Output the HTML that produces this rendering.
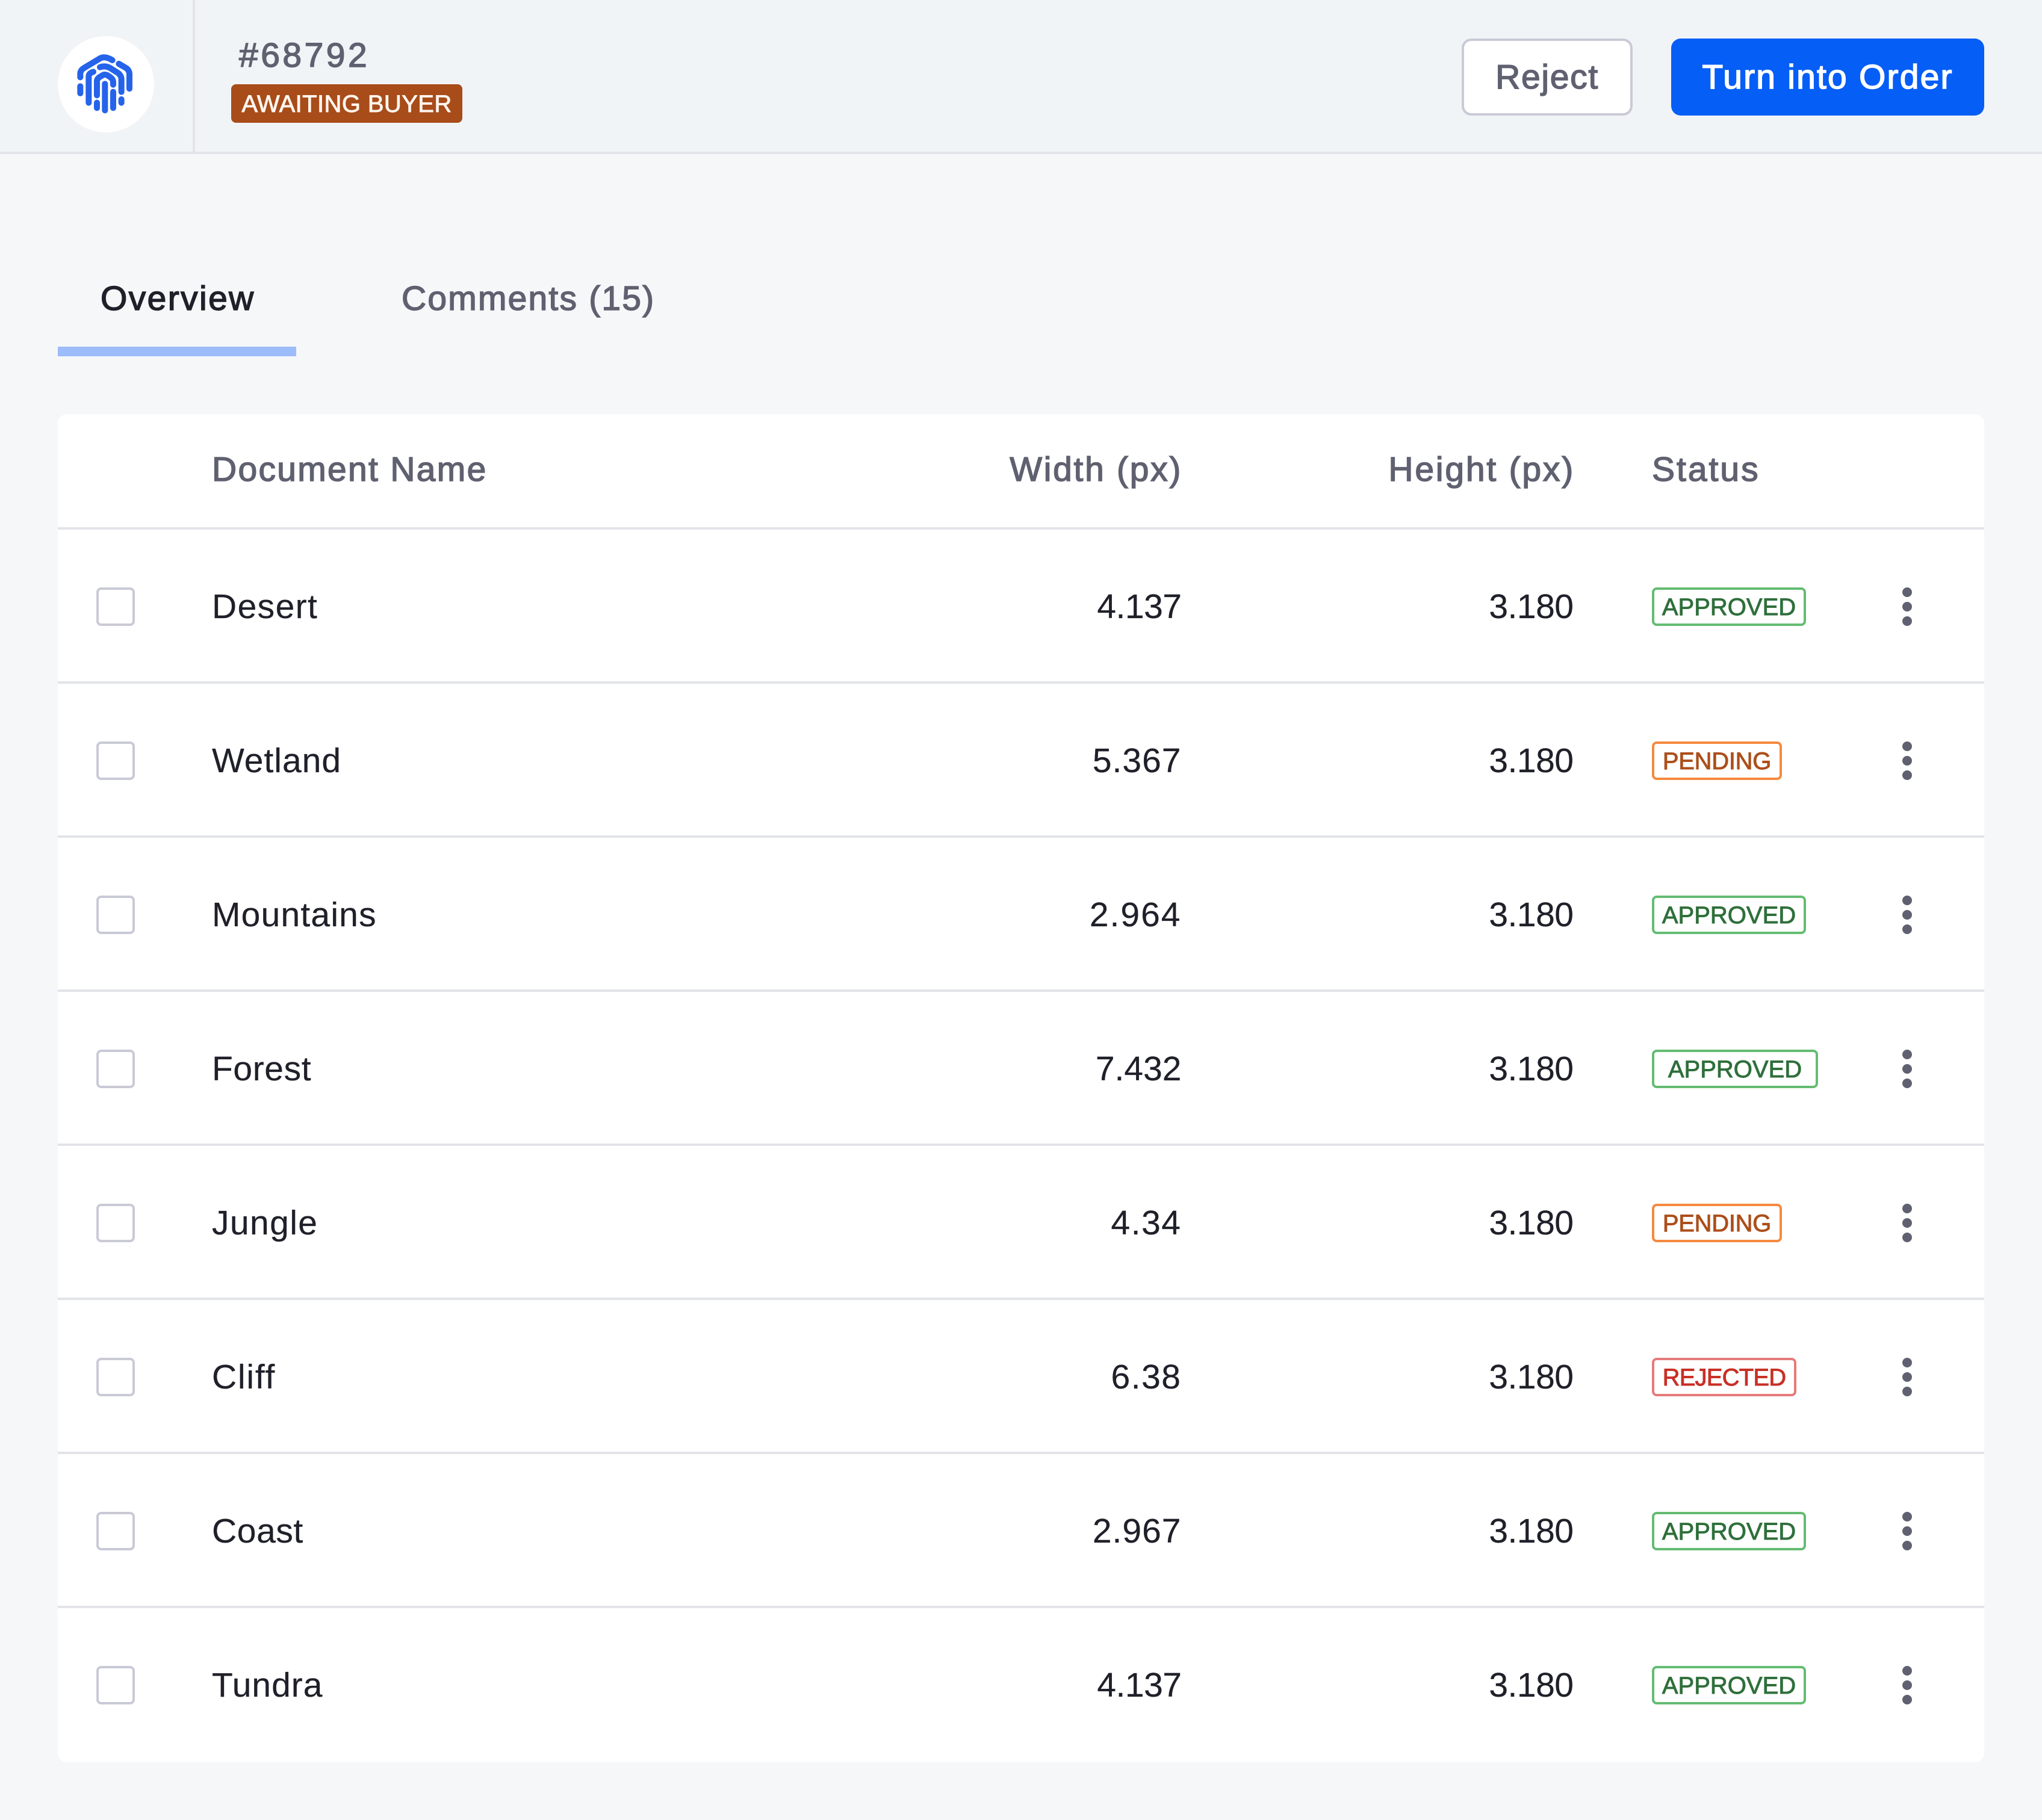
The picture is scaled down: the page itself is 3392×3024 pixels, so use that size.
<!DOCTYPE html>
<html lang="en">
<head>
<meta charset="utf-8">
<title>#68792</title>
<style>
html,body{margin:0;padding:0}
body{width:3392px;height:3024px;overflow:hidden;background:#f6f7f9;position:relative;font-family:"Liberation Sans",sans-serif;color:#1f2029}
*{box-sizing:border-box}
.t{position:absolute;white-space:nowrap;line-height:1;font-size:57px}
.m{-webkit-text-stroke:1.5px currentColor}
.g{color:#5f6170}
header{position:absolute;left:0;top:0;width:3392px;height:256px;background:#f1f4f7;border-bottom:4px solid #e2e4e9}
.vd{position:absolute;left:320px;top:0;width:4px;height:252px;background:#e2e4e9}
.logo{position:absolute;left:96px;top:60px;width:160px;height:160px;border-radius:50%;background:#fff}
.ic{position:absolute;left:60px;top:40px;width:240px;height:200px}
.aw{position:absolute;left:384px;top:140px;width:384px;height:64px;padding-top:3px;border-radius:8px;background:#a84c1a;color:#fff6ee;font-size:40px;display:flex;align-items:center;justify-content:center;letter-spacing:.4px;-webkit-text-stroke:.9px currentColor}
.btn{position:absolute;top:64px;height:128px;border-radius:16px;display:flex;align-items:center;justify-content:center;font-size:57px;-webkit-text-stroke:1.5px currentColor}
.rej{left:2428px;width:284px;background:#fff;border:4px solid #c9cad6;color:#5f6170;letter-spacing:1.7px}
.turn{left:2776px;width:520px;background:#055ef6;color:#fff;letter-spacing:2.2px}
.ul{position:absolute;left:96px;top:576px;width:396px;height:16px;background:#9dbcfb}
.card{position:absolute;left:96px;top:688px;width:3200px;height:2240px;background:#fff;border-radius:16px}
.hd{position:absolute;left:0;top:0;width:3200px;height:192px;border-bottom:4px solid #e2e4e9}
.hd .t{top:64px}
.row{position:absolute;left:0;width:3200px;height:256px;border-bottom:4px solid #e2e4e9}
.row:last-child{border-bottom:0}
.row .t{top:100px;-webkit-text-stroke:.25px currentColor}
.n{left:256px;letter-spacing:1px}
.w,.h{text-align:right}
.w{right:1334px;margin-right:-.5px}
.h{right:683px;letter-spacing:-.5px;margin-right:-.5px}
.cb{position:absolute;left:64px;top:96px;width:64px;height:64px;border:4px solid #c9cad6;border-radius:8px}
.b{position:absolute;left:2648px;top:96px;height:64px;padding-top:3px;border-radius:8px;border:4px solid;font-size:40px;display:flex;align-items:center;justify-content:center;-webkit-text-stroke:.9px currentColor;background:#fff}
.a{width:256px;border-color:#64bc72;color:#2f6f3b}
.af{width:276px}
.p{width:216px;border-color:#f6893f;color:#ac4f1a;letter-spacing:-.3px}
.r{width:240px;border-color:#e57b7b;color:#c92f25;letter-spacing:-.8px}
.d{position:absolute;left:3064px;top:96px;width:16px;height:16px;border-radius:50%;background:#5f6170;box-shadow:0 24px 0 #5f6170,0 48px 0 #5f6170}
</style>
</head>
<body>
<header>
  <div class="logo"></div>
  <svg class="ic" viewBox="0 0 720 600" fill="none" stroke="#2563eb" stroke-width="30" stroke-linecap="round" stroke-linejoin="round">
    <path d="M220 265V248Q220 230 240 218L320 170Q345 158 380 180"/>
    <path d="M220 310V345"/>
    <path d="M262 392V262Q262 245 285 238"/>
    <path d="M412 198L450 220Q465 232 465 250V322"/>
    <path d="M318 215Q345 205 370 220L410 245Q425 258 425 275V338"/>
    <path d="M425 375V392"/>
    <path d="M303 355V285Q303 272 318 263L335 253Q345 250 355 255L370 265Q384 275 384 290V302"/>
    <path d="M303 392V418"/>
    <path d="M343 298V430"/>
    <path d="M384 338V418"/>
  </svg>
  <div class="vd"></div>
  <div class="t m g" style="left:397px;top:64px;letter-spacing:4.5px">#68792</div>
  <div class="aw">AWAITING BUYER</div>
  <div class="btn rej">Reject</div>
  <div class="btn turn">Turn into Order</div>
</header>

<div class="t m" style="left:167px;top:468px;letter-spacing:2.4px;color:#1f2029">Overview</div>
<div class="t m g" style="left:667px;top:468px;letter-spacing:2.2px">Comments (15)</div>
<div class="ul"></div>

<div class="card">
  <div class="hd">
    <div class="t m g" style="left:256px;letter-spacing:2.3px">Document Name</div>
    <div class="t m g w" style="letter-spacing:2.7px;margin-right:-2px">Width (px)</div>
    <div class="t m g h" style="letter-spacing:2.8px;margin-right:-3px">Height (px)</div>
    <div class="t m g" style="left:2648px;letter-spacing:3px">Status</div>
  </div>
  <div class="row" style="top:192px"><div class="cb"></div><div class="t n" style="letter-spacing:1.4px">Desert</div><div class="t w" style="letter-spacing:-.5px">4.137</div><div class="t h">3.180</div><div class="b a">APPROVED</div><div class="d"></div></div>
  <div class="row" style="top:448px"><div class="cb"></div><div class="t n">Wetland</div><div class="t w" style="letter-spacing:1px">5.367</div><div class="t h">3.180</div><div class="b p">PENDING</div><div class="d"></div></div>
  <div class="row" style="top:704px"><div class="cb"></div><div class="t n" style="letter-spacing:1.2px">Mountains</div><div class="t w" style="letter-spacing:2px">2.964</div><div class="t h">3.180</div><div class="b a">APPROVED</div><div class="d"></div></div>
  <div class="row" style="top:960px"><div class="cb"></div><div class="t n" style="letter-spacing:.6px">Forest</div><div class="t w">7.432</div><div class="t h">3.180</div><div class="b a af">APPROVED</div><div class="d"></div></div>
  <div class="row" style="top:1216px"><div class="cb"></div><div class="t n" style="letter-spacing:1.4px">Jungle</div><div class="t w" style="letter-spacing:1.5px">4.34</div><div class="t h">3.180</div><div class="b p">PENDING</div><div class="d"></div></div>
  <div class="row" style="top:1472px"><div class="cb"></div><div class="t n" style="letter-spacing:1.8px">Cliff</div><div class="t w" style="letter-spacing:1.5px">6.38</div><div class="t h">3.180</div><div class="b r">REJECTED</div><div class="d"></div></div>
  <div class="row" style="top:1728px"><div class="cb"></div><div class="t n" style="letter-spacing:.6px">Coast</div><div class="t w" style="letter-spacing:1px">2.967</div><div class="t h">3.180</div><div class="b a">APPROVED</div><div class="d"></div></div>
  <div class="row" style="top:1984px"><div class="cb"></div><div class="t n">Tundra</div><div class="t w" style="letter-spacing:-.5px">4.137</div><div class="t h">3.180</div><div class="b a">APPROVED</div><div class="d"></div></div>
</div>
</body>
</html>
